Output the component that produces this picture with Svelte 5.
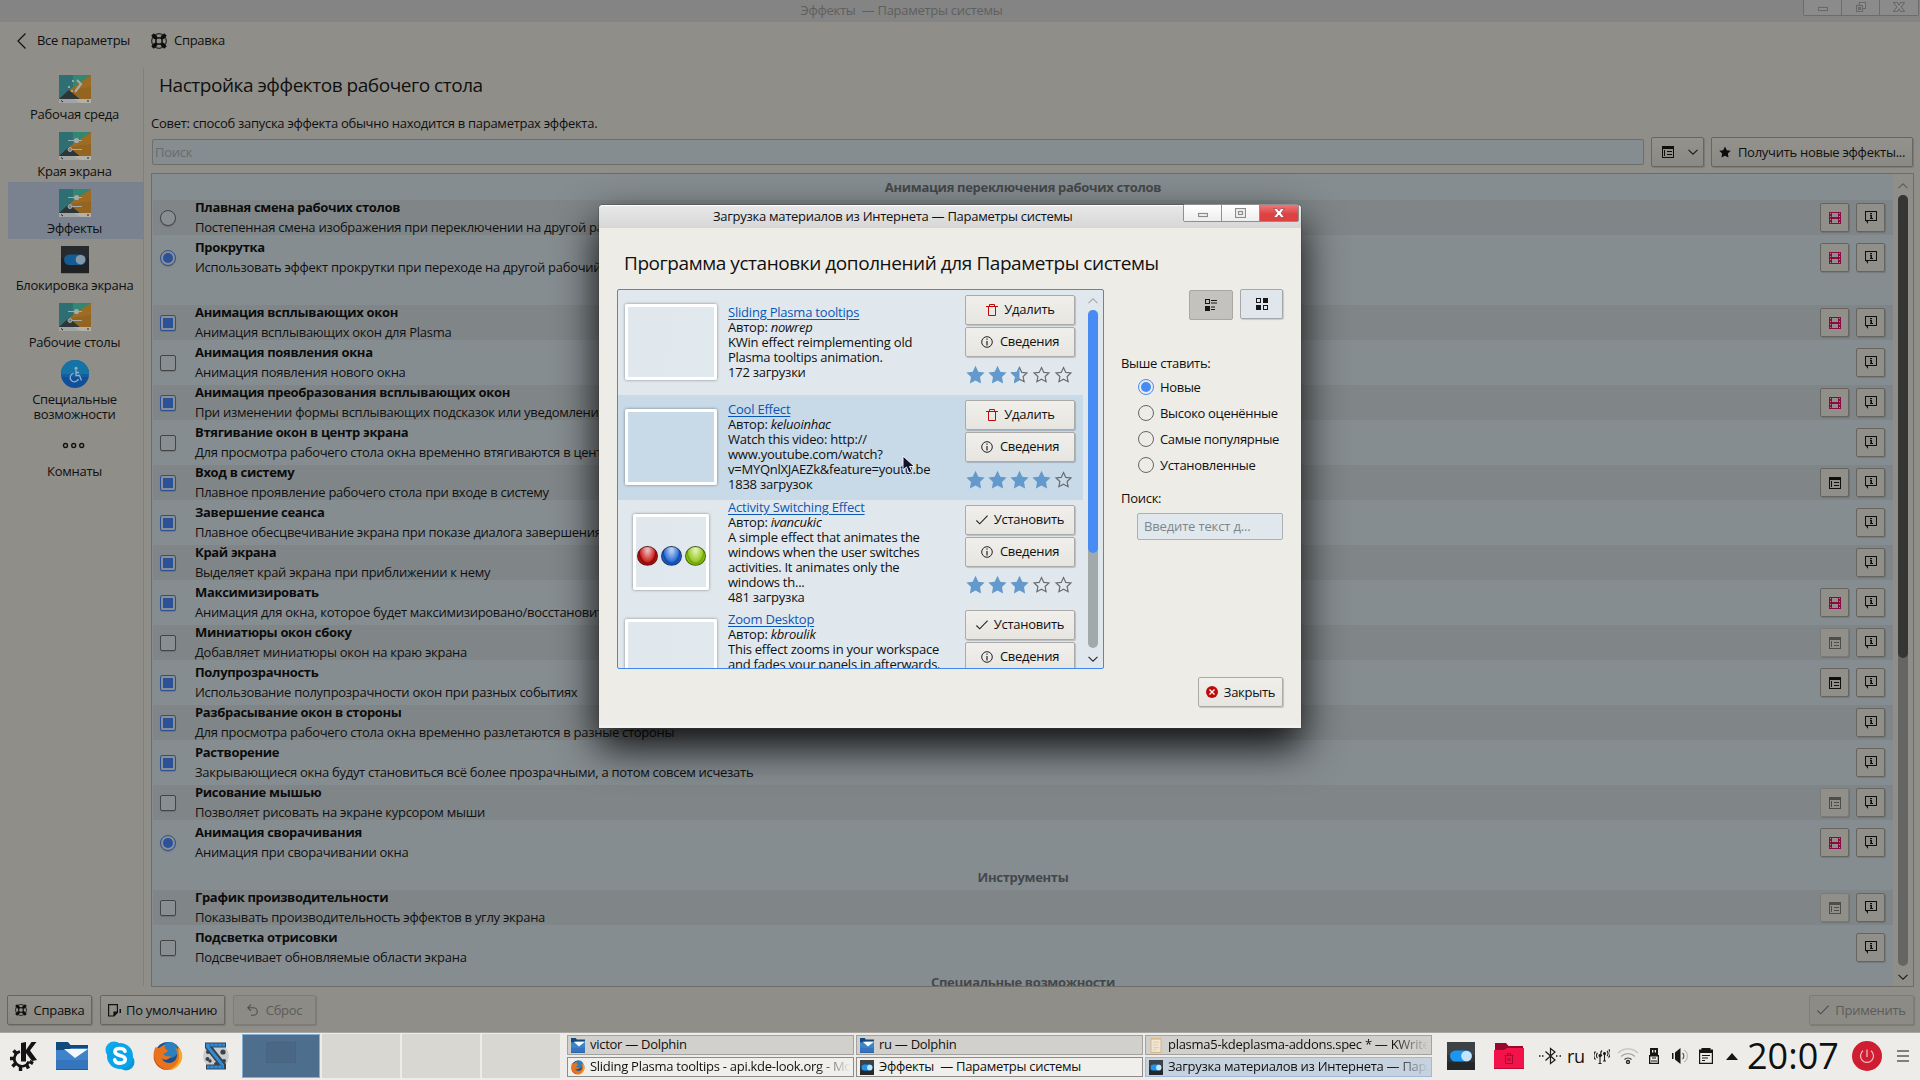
<script>
  const sections = [
    { name: 'Рабочая среда', icon: 'look' },
    { name: 'Края экрана', icon: 'sliders' },
    { name: 'Эффекты', icon: 'sliders', current: true },
    { name: 'Блокировка экрана', icon: 'toggle' },
    { name: 'Рабочие столы', icon: 'sliders' },
    { name: 'Специальные\nвозможности', icon: 'access', tall: true },
    { name: 'Комнаты', icon: 'dots' }
  ];

  // kind: r = radio, c = checkbox; extra: v = video, s = settings, d = settings (disabled)
  const groups = [
    {
      title: 'Анимация переключения рабочих столов',
      rows: [
        { kind: 'r', on: false, t: 'Плавная смена рабочих столов', d: 'Постепенная смена изображения при переключении на другой рабочий стол', extra: 'v' },
        { kind: 'r', on: true, t: 'Прокрутка', d: 'Использовать эффект прокрутки при переходе на другой рабочий стол', extra: 'v' }
      ]
    },
    {
      title: '',
      rows: [
        { kind: 'c', on: true, t: 'Анимация всплывающих окон', d: 'Анимация всплывающих окон для Plasma', extra: 'v' },
        { kind: 'c', on: false, t: 'Анимация появления окна', d: 'Анимация появления нового окна' },
        { kind: 'c', on: true, t: 'Анимация преобразования всплывающих окон', d: 'При изменении формы всплывающих подсказок или уведомлений', extra: 'v' },
        { kind: 'c', on: false, t: 'Втягивание окон в центр экрана', d: 'Для просмотра рабочего стола окна временно втягиваются в центр' },
        { kind: 'c', on: true, t: 'Вход в систему', d: 'Плавное проявление рабочего стола при входе в систему', extra: 's' },
        { kind: 'c', on: true, t: 'Завершение сеанса', d: 'Плавное обесцвечивание экрана при показе диалога завершения' },
        { kind: 'c', on: true, t: 'Край экрана', d: 'Выделяет край экрана при приближении к нему' },
        { kind: 'c', on: true, t: 'Максимизировать', d: 'Анимация для окна, которое будет максимизировано/восстановить', extra: 'v' },
        { kind: 'c', on: false, t: 'Миниатюры окон сбоку', d: 'Добавляет миниатюры окон на краю экрана', extra: 'd' },
        { kind: 'c', on: true, t: 'Полупрозрачность', d: 'Использование полупрозрачности окон при разных событиях', extra: 's' },
        { kind: 'c', on: true, t: 'Разбрасывание окон в стороны', d: 'Для просмотра рабочего стола окна временно разлетаются в разные стороны' },
        { kind: 'c', on: true, t: 'Растворение', d: 'Закрывающиеся окна будут становиться всё более прозрачными, а потом совсем исчезать' },
        { kind: 'c', on: false, t: 'Рисование мышью', d: 'Позволяет рисовать на экране курсором мыши', extra: 'd' },
        { kind: 'r', on: true, t: 'Анимация сворачивания', d: 'Анимация при сворачивании окна', extra: 'v' }
      ]
    },
    {
      title: 'Инструменты',
      rows: [
        { kind: 'c', on: false, t: 'График производительности', d: 'Показывать производительность эффектов в углу экрана', extra: 'd' },
        { kind: 'c', on: false, t: 'Подсветка отрисовки', d: 'Подсвечивает обновляемые области экрана' }
      ]
    },
    { title: 'Специальные возможности', rows: [] }
  ];

  const addons = [
    { name: 'Sliding Plasma tooltips', author: 'nowrep', lines: ['KWin effect reimplementing old', 'Plasma tooltips animation.'], count: '172 загрузки', installed: true, rating: 2.5 },
    { name: 'Cool Effect', author: 'keluoinhac', lines: ['Watch this video: http://', 'www.youtube.com/watch?', 'v=MYQnlXJAEZk&feature=youtu.be'], count: '1838 загрузок', installed: true, rating: 4, hover: true },
    { name: 'Activity Switching Effect', author: 'ivancukic', lines: ['A simple effect that animates the', 'windows when the user switches', 'activities. It animates only the', 'windows th...'], count: '481 загрузка', rating: 3, balls: true },
    { name: 'Zoom Desktop', author: 'kbroulik', lines: ['This effect zooms in your workspace', 'and fades your panels in afterwards.', ''], count: '', rating: 0 }
  ];

  const sorts = ['Новые', 'Высоко оценённые', 'Самые популярные', 'Установленные'];

  const tasks = [
    { icon: 'folder', name: 'victor — Dolphin', min: true },
    { icon: 'folder', name: 'ru — Dolphin', min: true },
    { icon: 'doc', name: 'plasma5-kdeplasma-addons.spec * — KWrite', min: true, fade: true },
    { icon: 'fox', name: 'Sliding Plasma tooltips - api.kde-look.org - Mozilla', fade: true },
    { icon: 'toggle', name: 'Эффекты\u00a0 — Параметры системы' },
    { icon: 'toggle', name: 'Загрузка материалов из Интернета — Параметры', active: true, fade: true }
  ];

  const star = 'M9.5 .8 12.3 6.7 18.6 7.5 14 11.9 15.1 18.4 9.5 15.4 3.9 18.4 5 11.9 .4 7.5 6.7 6.7Z';
  const starOutline = 'M9.5 2.6 11.8 7.4 16.9 8 13.1 11.5 14.1 16.7 9.5 14.2 4.9 16.7 5.9 11.5 2.1 8 7.2 7.4Z';
</script>

{#snippet toggle()}
  <rect width="28" height="28" fill="#2f3336" />
  <path d="M0 0H28V13H0Z" fill="#3c4246" />
  <path d="M0 20H28V28H0Z" fill="#24272a" />
  <rect x="3" y="8.5" width="22" height="11" rx="5.5" fill="#1c96f3" />
  <circle cx="19.5" cy="14" r="5.3" fill="#c3e4fb" />
{/snippet}

{#snippet folder()}
  <path d="M0 0H12L14.500 3H32V14H0Z" fill="#134a7c" />
  <path d="M0 8H12L15 6H32V28H0Z" fill="#3f84ca" />
  <path d="M0 18H32V28H0Z" fill="#3575bd" />
  <path d="M8 7H32L19 16Z" fill="#f6f9fc" />
  <path d="M0 27H32V28H0Z" fill="#27599a" />
{/snippet}

{#snippet fox()}
  <circle cx="15" cy="14.500" r="13.500" fill="#17508f" />
  <circle cx="17" cy="9" r="8" fill="#2c80bd" />
  <path d="M2.500 6C3.500 7 5 6.500 6 7C9 4.500 11 4 12.500 4C11 6 11.500 8 15 9.500C14 12 11 12 10.500 13C11.500 15 15 16 18 15C16.500 19 11 20 9 17C10 22 18 24 22.500 19C25 15.500 24.500 10 22 6.500C27 9 28 12 28.500 15C28.500 22 23 29 15 29C7 29 .5 23 .5 15C.5 11 1.500 8 2.500 6Z" fill="#e8731f" />
  <path d="M25 6C28.500 9 29.500 13 29.200 17C28 24 22 29 15.500 29C21 27 26.500 22 26 15C26 11 25 8 25 6Z" fill="#f7a823" />
  <path d="M1 15C2 23 8 28 15 29C8 29.500 .5 23 1 15Z" fill="#c5391f" />
{/snippet}

{#snippet help(size)}
  <svg class="ico" width={size} height={size} viewBox="0 0 16 16" fill="none" stroke="#0e0e0d">
    <circle cx="8" cy="8" r="7.300" stroke-width="1" />
    <circle cx="8" cy="8" r="3.300" stroke-width="1" />
    <path d="M1.500 1.500 5.500 5.500M14.500 1.500 10.500 5.500M1.500 14.500 5.500 10.500M14.500 14.500 10.500 10.500" stroke-width="3.600" />
    <path d="M5 2V14M11 2V14M2 5H14M2 11H14" stroke-width="1" />
  </svg>
{/snippet}

{#snippet settingsIcon()}
  <svg class="ico" width="12" height="12" viewBox="0 0 12 12" fill="#0e0e0d">
    <path d="M0 0H12V12H0ZM1 3V11H11V3Z" fill-rule="evenodd" />
    <path d="M2 4H3V10H2ZM5 5H10V6H5ZM5 8H10V9H5Z" />
  </svg>
{/snippet}

{#snippet videoIcon()}
  <svg class="ico" width="12" height="12" viewBox="0 0 12 12">
    <path d="M0 0H12V12H0ZM3 1V5H9V1ZM3 7V11H9V7Z" fill="#8a0b42" fill-rule="evenodd" />
    <path d="M1 1H2V2H1ZM1 4H2V5H1ZM1 7H2V8H1ZM1 10H2V11H1ZM10 1H11V2H10ZM10 4H11V5H10ZM10 7H11V8H10ZM10 10H11V11H10Z" fill="#aa8f94" />
  </svg>
{/snippet}

{#snippet infoIcon()}
  <svg class="ico" width="12" height="13" viewBox="0 0 12 13" fill="#0e0e0d">
    <path d="M0 0H12V10H3V13L1 10H0ZM1 1V9H11V1Z" fill-rule="evenodd" />
    <path d="M5 2H7V3.300H5ZM5 4H7V7H8V8H5V7H5.500V5H5Z" />
  </svg>
{/snippet}

{#snippet chevron(dir, color)}
  <svg class="chev" width="10" height="6" viewBox="0 0 10 6" fill="none" stroke={color} stroke-width="1.100">
    <path d={dir === 'up' ? 'M.5 5.200 5 .8 9.500 5.200' : 'M.5 .8 5 5.200 9.500 .8'} />
  </svg>
{/snippet}

{#snippet check(color)}
  <svg class="ico" width="12" height="10" viewBox="0 0 12 10" fill="none" stroke={color} stroke-width="1.100"><path d="M.4 5.500 3.700 8.800 11.600 .7" /></svg>
{/snippet}

<div class="desktop">
  <main class="app">
    <header class="titlebar">
      <span class="title">Эффекты&nbsp; — Параметры системы</span>
      <div class="winbtns dim">
        <i><svg width="10" height="10" viewBox="0 0 10 10"><rect x=".5" y="5.500" width="9" height="3" /></svg></i>
        <i><svg width="10" height="10" viewBox="0 0 10 10"><path d="M3.500 3.500V.5H9.500V6.500H6.500" /><rect x=".5" y="3.500" width="6" height="6" /><rect x="2.500" y="5.500" width="2" height="2" /></svg></i>
        <i><svg width="12" height="10" viewBox="0 0 12 10"><path class="x" d="M.5 .5H4L6 3 8 .5H11.500L8 5 11.500 9.500H8L6 7 4 9.500H.5L4 5Z" /></svg></i>
      </div>
    </header>

    <nav class="toolbar">
      <svg class="back" width="9" height="16" viewBox="0 0 9 16" fill="none" stroke="#111" stroke-width="1.200"><path d="M8.500 .5 1 8 8.500 15.500" /></svg>
      <span class="all">Все параметры</span>
      {@render help(16)}
      <span class="hlp">Справка</span>
    </nav>

    <div class="middle">
      <aside class="sidebar">
        {#each sections as s}
          <div class="section" class:current={s.current} class:tall={s.tall}>
            <svg width="32" height="28" viewBox="0 0 32 28">
              {#if s.icon === 'look' || s.icon === 'sliders'}
                <path d="M0 0H32V24H0Z" fill="#2d6f72" />
                <path d="M14 0H32L14 15Z" fill="#338672" />
                <path d="M0 24 11 14 21 24Z" fill="#2c3637" />
                <path d="M32 0V24H21L10 15Z" fill="#9d6c22" />
                <path d="M32 12V24H21L10 15Z" fill="#946520" />
                <path d="M0 24H32V28H0Z" fill="#a3a4a4" />
                <path d="M14 24H32V28H22Z" fill="#b3b1aa" />
                <path d="M2 25.500 4 27M29 25V27" stroke="#222" stroke-width="1" />
                {#if s.icon === 'sliders'}
                  <path d="M9 8.500H23M9 17.500H23" stroke="#a5aaa8" stroke-width="1.200" />
                  <circle cx="17.500" cy="8.500" r="2.600" fill="#a5aaa8" />
                  <circle cx="11" cy="17.500" r="2" fill="#7a7f7d" stroke="#a5aaa8" />
                {:else}
                  <path d="M18 5 22 9 16 17" stroke="#a5aaa8" stroke-width="2.200" fill="none" />
                  <path d="M13 5h2v2h-2zM9 11h2v2H9zM12 15h2v2h-2z" fill="#9aa6a5" />
                {/if}
              {:else if s.icon === 'toggle'}
                <rect x="2" width="28" height="27" fill="#1e2022" />
                <path d="M2 0H30V12H2Z" fill="#272a2c" />
                <path d="M2 27H30V28H2Z" fill="#77756f" />
                <rect x="5" y="8.500" width="22" height="10.500" rx="5.200" fill="#145c93" />
                <circle cx="21.500" cy="13.700" r="4.800" fill="#8499a8" />
              {:else if s.icon === 'access'}
                <circle cx="16" cy="14" r="14" fill="#115ea1" />
                <path d="M2 14A14 14 0 0 1 30 14Z" fill="#1573a5" />
                <path d="M2.400 17A14 14 0 0 0 29.600 17Z" fill="#124f9a" />
                <circle cx="17" cy="8.300" r="1.500" fill="#95b1c5" />
                <path d="M17 10V15.500H20.500L22.500 20.500M17 12.500H20M14.500 13.300A4.300 4.300 0 1 0 19.500 19" stroke="#95b1c5" stroke-width="1.300" fill="none" />
              {:else}
                <g fill="none" stroke="#111" stroke-width="1.300"><circle cx="6.500" cy="13.500" r="2" /><circle cx="14.700" cy="13.500" r="2" /><circle cx="22.700" cy="13.500" r="2" /></g>
              {/if}
            </svg>
            <span>{s.name}</span>
          </div>
        {/each}
      </aside>

      <section class="content">
        <h1>Настройка эффектов рабочего стола</h1>
        <p class="tip">Совет: способ запуска эффекта обычно находится в параметрах эффекта.</p>
        <div class="filter">
          <div class="search">Поиск</div>
          <div class="btn split">{@render settingsIcon()}{@render chevron('down', '#1c1c1b')}</div>
          <div class="btn getnew">
            <svg class="ico" width="12" height="12" viewBox="0 0 19 19"><path d={star} fill="#0c0c0c" /></svg>
            <span>Получить новые эффекты...</span>
          </div>
        </div>

        <div class="effects">
          <div class="rows">
            {#each groups as g}
              <h2>{g.title}</h2>
              {#each g.rows as r, i}
                <div class="row" class:odd={i % 2 === 0}>
                  <span class="mark" class:radio={r.kind === 'r'} class:on={r.on}></span>
                  <div class="txt"><b>{r.t}</b><span>{r.d}</span></div>
                  {#if r.extra === 'v'}<span class="tool">{@render videoIcon()}</span>{/if}
                  {#if r.extra === 's' || r.extra === 'd'}<span class="tool" class:off={r.extra === 'd'}>{@render settingsIcon()}</span>{/if}
                  <span class="tool">{@render infoIcon()}</span>
                </div>
              {/each}
            {/each}
          </div>
          <div class="scroll">
            {@render chevron('up', '#5f5e5a')}
            <div class="groove"><div class="thumb"></div></div>
            {@render chevron('down', '#1d1d1c')}
          </div>
        </div>
      </section>
    </div>

    <footer class="actions">
      <div class="btn a1">{@render help(12)}<span>Справка</span></div>
      <div class="btn a2">
        <svg class="ico" width="13" height="13" viewBox="0 0 13 13" fill="none" stroke="#111" stroke-width="1.200"><path d="M.6 .6H9.400V8.500L6 12H.6Z" /><path d="M9.500 8H6V12" fill="#111" /><path d="M12.300 5V9" stroke-width="1.600" /></svg>
        <span>По умолчанию</span>
      </div>
      <div class="btn a3 disabled">
        <svg class="ico" width="11" height="12" viewBox="0 0 11 12" fill="none" stroke="#4f4e4b" stroke-width="1.100"><path d="M4 .6 .8 3.700 4 6.800M1 3.700H6.500A3.700 3.700 0 0 1 6.500 11.300H4" /></svg>
        <span>Сброс</span>
      </div>
      <div class="btn a4 disabled">{@render check('#4f4e4b')}<span>Применить</span></div>
    </footer>
  </main>

  <footer class="panel">
    <div class="launch">
      <svg width="28" height="30" viewBox="0 0 28 30">
        <path d="M10 10.500A7.500 7.500 0 1 0 18.800 20.500" fill="none" stroke="#141414" stroke-width="2.600" />
        <path d="M3.500 9.500 6 12M0 17.500H4M2.500 25.500 5.500 22.500M10.500 25V30M16.500 23.500 18.500 27.500M19.500 20.500 23 22.500" stroke="#141414" stroke-width="3.400" />
        <path d="M11 2 16 1V9L21.500 1H26.500L20 9.500 27 19 22 20 16 12V20.500L11 20.500Z" fill="#141414" />
      </svg>
      <svg width="32" height="28" viewBox="0 0 32 28">{@render folder()}</svg>
      <svg width="30" height="30" viewBox="0 0 30 30">
        <circle cx="9" cy="9" r="8.500" fill="#0fa8ea" /><circle cx="21" cy="21" r="8.500" fill="#0b96d8" /><circle cx="15" cy="15" r="13" fill="#0aa5e9" />
        <path d="M20 10.200C19 6.800 10 6.300 10 10.800C10 15.500 20.300 13.300 20.300 18.500C20.300 23.300 10.300 23.200 9.700 18.700" fill="none" stroke="#fff" stroke-width="3.600" stroke-linecap="round" />
      </svg>
      <svg width="30" height="30" viewBox="0 0 30 30">{@render fox()}</svg>
      <svg width="26" height="28" viewBox="0 0 26 28">
        <circle cx="13" cy="14" r="12.800" fill="#c9cdd0" />
        <g fill="#3c4246"><circle cx="5" cy="10" r="2" /><circle cx="4.500" cy="17" r="2" /><circle cx="20" cy="10" r="2.600" /><circle cx="13" cy="22" r="2" /><circle cx="7" cy="19" r="1.700" /><circle cx="21" cy="19" r="2" /></g>
        <path d="M2 .5H23V5.500H10L23 22V27.500H3V22.500H15L2 6Z" fill="#3a4248" />
        <path d="M3 1.500H22V4.500H6.500L21 22.500V26.500H4V23.500H18L3 5Z" fill="#2f8ddc" />
        <path d="M7 1V5M11 1V5M15 1V5M19 1V5M7 23V27M11 23V27M15 23V27M19 23V27" stroke="#1f5f9c" stroke-width=".8" />
      </svg>
    </div>

    <div class="pager"><i class="here"><b></b></i><i></i><i></i><i></i></div>

    <div class="tasks">
      {#each tasks as t}
        <div class="task" class:min={t.min} class:active={t.active}>
          <svg width="14" height="15" viewBox={t.icon === 'folder' ? '2 0 30 28' : t.icon === 'fox' ? '0 0 30 30' : '0 0 28 28'} preserveAspectRatio="none">
            {#if t.icon === 'folder'}{@render folder()}
            {:else if t.icon === 'fox'}{@render fox()}
            {:else if t.icon === 'toggle'}{@render toggle()}
            {:else}
              <path d="M3 0H25V28H3Z" fill="#d8b887" /><path d="M5 3H23V26H5Z" fill="#f1e6d3" />
              <path d="M8 8H20M8 13H18M8 18H20M8 22H15" stroke="#dac6a2" stroke-width="1.500" />
            {/if}
          </svg>
          <span class:fade={t.fade}>{t.name}</span>
        </div>
      {/each}
    </div>

    <div class="tray">
      <svg class="t-toggle" width="28" height="28" viewBox="0 0 28 28">{@render toggle()}</svg>
      <svg class="t-trash" width="30" height="27" viewBox="0 0 30 27">
        <path d="M1 0H12L14.500 3H29V12H1Z" fill="#96082c" />
        <path d="M0 7H10L13 5H30V26H0Z" fill="#f3124a" /><path d="M0 25H30V26H0Z" fill="#b90d38" />
        <path d="M10.500 12.500H19.500M13.500 12V10.500H16.500V12M11.500 13V20.500H18.500V13M14 15V18M16 15V18" fill="none" stroke="#9c0c31" />
      </svg>
      <svg class="t-bt" width="22" height="18" viewBox="0 0 22 18" fill="none" stroke="#1b1b1b" stroke-width="1.200">
        <path d="M6.500 4.500 16 13 11.500 16.500V1.500L16 5 6.500 13.500" /><path d="M0 9H1.500M3 9H4.500M17 9H18.500M20.500 9H22" stroke-width="1.600" />
      </svg>
      <span class="lang">ru</span>
      <svg class="t-ant" width="16" height="16" viewBox="0 0 16 16" fill="none" stroke="#1b1b1b" stroke-width="1.100">
        <path d="M6 8V15.500M4.500 15.500H7.500M10.500 6V12.500M9 13H12" /><circle cx="6" cy="7.500" r="1" fill="#1b1b1b" /><circle cx="10.500" cy="5.500" r="1" fill="#1b1b1b" />
        <path d="M3.500 5A3.500 3.500 0 0 0 3.500 10M1.500 3.500A5.500 5.500 0 0 0 1.500 11.500M13 3A3.500 3.500 0 0 1 13 8M14.800 1.500A5.500 5.500 0 0 1 14.500 9.500M8 2.500A4 4 0 0 0 8 8" />
      </svg>
      <svg class="t-wifi" width="22" height="16" viewBox="0 0 22 16" fill="none" stroke-width="1.300">
        <path d="M1 5A14 14 0 0 1 21 5" stroke="#c2c1be" /><path d="M4 8.500A10 10 0 0 1 18 8.500" stroke="#a9a8a5" /><path d="M7.500 11.500A5 5 0 0 1 14.500 11.500" stroke="#3a3a3a" /><circle cx="11" cy="14" r="1.500" stroke="#222" />
      </svg>
      <svg class="t-usb" width="10" height="16" viewBox="0 0 10 16"><path d="M1 0H9V7H10V16H0V7H1Z" fill="#161616" /><path d="M3 2H4.300V4.500H3ZM5.700 2H7V4.500H5.700ZM1.300 8.500H8.700V14.700H1.300Z" fill="#edece8" /><path d="M3 10H7M2 13H8" stroke="#161616" /></svg>
      <svg class="t-vol" width="16" height="16" viewBox="0 0 16 16"><path d="M0 5H1.500V11H0ZM3 4.500 8.500 0V16L3 11.500Z" fill="#161616" /><path d="M10.500 5A4 4 0 0 1 10.500 11" fill="none" stroke="#555" stroke-width="1.200" /><path d="M12 2A7 7 0 0 1 12 14" fill="none" stroke="#bbb" stroke-width="1.200" /></svg>
      <svg class="t-clip" width="14" height="16" viewBox="0 0 14 16"><path d="M0 1.500H2.500V0H11.500V1.500H14V16H0ZM1.200 5V14.800H12.800V5Z" fill="#161616" fill-rule="evenodd" /><path d="M3 7.500H11M3 10H9M3 12.500H6" stroke="#161616" stroke-width="1.100" /></svg>
      <svg class="t-up" width="12" height="7" viewBox="0 0 12 7"><path d="M0 7 6 0 12 7Z" fill="#161616" /></svg>
      <span class="clock">20:07</span>
      <svg class="t-power" width="30" height="30" viewBox="0 0 30 30"><circle cx="15" cy="15" r="15" fill="#cf1d31" /><path d="M15 8.500V16M11 9.800A6.500 6.500 0 1 0 19 9.800" fill="none" stroke="#f3c4ca" stroke-width="1.200" /></svg>
      <svg class="t-menu" width="12" height="12" viewBox="0 0 12 12"><path d="M0 1H12M0 6H12M0 11H12" stroke="#807f7c" stroke-width="1.800" /></svg>
    </div>
  </footer>

  <div class="dialog">
    <header class="dtitle">
      <span>Загрузка материалов из Интернета — Параметры системы</span>
      <div class="winbtns">
        <i><svg width="10" height="10" viewBox="0 0 10 10"><rect x=".5" y="5.500" width="9" height="3" /></svg></i>
        <i><svg width="11" height="10" viewBox="0 0 11 10"><rect x=".5" y=".5" width="10" height="9" /><rect x="3.500" y="3.500" width="4" height="3" /></svg></i>
        <i class="red"><svg width="12" height="10" viewBox="0 0 12 10"><path class="x" d="M.5 .5H4L6 3 8 .5H11.500L8 5 11.500 9.500H8L6 7 4 9.500H.5L4 5Z" /></svg></i>
      </div>
    </header>
    <h1>Программа установки дополнений для Параметры системы</h1>

    <div class="dbody">
      <div class="addons">
        <div class="items">
          {#each addons as a}
            <article class:hover={a.hover}>
              <div class="shot" class:small={a.balls}>
                {#if a.balls}
                  {#each ['red', 'blue', 'green'] as c}<i class={c}></i>{/each}
                {/if}
              </div>
              <div class="about" class:even={a.lines.length === 3}>
                <a href="#{a.author}">{a.name}</a>
                <span>Автор: <em>{a.author}</em></span>
                {#each a.lines as l}<span>{l}</span>{/each}
                <span>{a.count}</span>
              </div>
              <div class="ctl">
                <div class="btn" class:remove={a.installed}>
                  {#if a.installed}
                    <svg class="ico" width="12" height="12" viewBox="0 0 12 12" fill="none" stroke="#bf0909"><path d="M0 2.500H12M3.500 2.500V.5H8.500V2.500M2.500 2.500V11.500H9.500V2.500" /></svg>
                    <span>Удалить</span>
                  {:else}
                    {@render check('#222')}<span>Установить</span>
                  {/if}
                </div>
                <div class="btn">
                  <svg class="ico" width="12" height="12" viewBox="0 0 12 12" fill="none" stroke="#222"><circle cx="6" cy="6" r="5.300" /><path d="M6 2.500V3.800M6 5V9.500" stroke-width="1.200" /></svg>
                  <span>Сведения</span>
                </div>
                <div class="stars">
                  {#each [1, 2, 3, 4, 5] as n}
                    <svg width="19" height="19" viewBox="0 0 19 19">
                      {#if a.rating >= n}
                        <path d={star} fill="#639acb" />
                      {:else}
                        <path d={starOutline} fill="none" stroke="#666b70" stroke-width="1.200" />
                        {#if a.rating > n - 1}<path d="M9.500 .8V15.400L3.900 18.400 5 11.900 .4 7.500 6.700 6.700Z" fill="#639acb" />{/if}
                      {/if}
                    </svg>
                  {/each}
                </div>
              </div>
            </article>
          {/each}
        </div>
        <div class="dscroll">
          {@render chevron('up', '#a9a9a6')}
          <div class="groove"><div class="thumb"></div></div>
          {@render chevron('down', '#2a2a2a')}
        </div>
      </div>

      <div class="side">
        <div class="views">
          <i class="pressed"><svg width="12" height="12" viewBox="0 0 12 12" fill="#161616"><path d="M0 0H5V5H0ZM1 1V4H4V1Z" fill-rule="evenodd" /><path d="M0 7H5V12H0ZM6 1H12V2H6ZM6 3.500H12V4.500H6ZM6 7.500H10V8.500H6ZM6 10H10V11H6Z" /></svg></i>
          <i><svg width="12" height="12" viewBox="0 0 12 12" fill="#161616"><path d="M0 0H5V5H0ZM1 1V4H4V1ZM7 7H12V12H7ZM8 8V11H11V8Z" fill-rule="evenodd" /><path d="M7 0H12V5H7ZM0 7H5V12H0Z" /></svg></i>
        </div>
        <span class="lab">Выше ставить:</span>
        {#each sorts as s, i}
          <div class="opt"><i class="rad" class:on={i === 0}></i>{s}</div>
        {/each}
        <span class="lab find">Поиск:</span>
        <div class="input">Введите текст д...</div>
      </div>
    </div>

    <div class="dfoot">
      <div class="btn close">
        <svg class="ico" width="12" height="12" viewBox="0 0 12 12"><circle cx="6" cy="6" r="6" fill="#bf0a0a" /><path d="M3.500 3.500 8.500 8.500M8.500 3.500 3.500 8.500" stroke="#fff" stroke-width="1.300" /></svg>
        <span>Закрыть</span>
      </div>
    </div>
  </div>

  <svg class="cursor" width="14" height="20" viewBox="0 0 14 20"><path d="M1 1V15L4.500 12 7 18 10 16.500 7.500 11.500H12.500Z" fill="#11132b" stroke="#f4f4f8" stroke-width="1" /></svg>
</div>

<style>
  :global(body) { margin: 0; overflow: hidden; }
  .desktop {
    position: relative; width: 1920px; height: 1080px; overflow: hidden;
    display: flex; flex-direction: column; box-sizing: border-box;
    font: 13px/15px 'Open Sans', 'Noto Sans', sans-serif; letter-spacing: -0.28px; color: #101010; white-space: nowrap;
  }
  .desktop :global(*) { box-sizing: border-box; }
  svg { display: block; flex: none; }
  i { font-style: normal; }
  h1 { margin: 0; font-size: 19px; line-height: 26px; font-weight: 400; letter-spacing: -0.46px; }

  .app { height: 1032px; background: #8f8e89; display: flex; flex-direction: column; }
  .titlebar { height: 22px; background: #848484; display: flex; justify-content: flex-end; align-items: flex-start; }
  .titlebar .title { flex: 1; padding: 3px 0 0 0; text-align: center; color: #5f5f5f; }
  .winbtns { display: flex; height: 18px; margin-right: 2px; border: 1px solid #8f8f8f; border-radius: 2px; }
  .winbtns i { width: 38px; display: flex; align-items: center; justify-content: center; background: linear-gradient(#fff, #ededed); border-right: 1px solid #8f8f8f; }
  .winbtns i:last-child { border: 0; }
  .winbtns svg { fill: #f4f4f4; stroke: #8b8b8b; stroke-width: 1.200; }
  .winbtns .red { background: linear-gradient(#ee7777, #dd4141 60%); }
  .winbtns .red svg { fill: #fff; stroke: #a04848; stroke-width: .8; }
  .winbtns.dim { margin: -2px 1px 0 0; border-color: #6c6c6c; }
  .winbtns.dim i { background: #8b8b8b; border-color: #6c6c6c; }
  .winbtns.dim svg { fill: #929292; stroke: #696969; }

  .toolbar { height: 46px; display: flex; align-items: center; padding: 0 0 9px 17px; }
  .all { width: 114px; margin-left: 11px; }
  .hlp { margin-left: 7px; }

  .middle { height: 918px; display: flex; }
  .sidebar { width: 144px; padding-left: 8px; border-right: 1px solid #76818b; }
  .section { height: 57px; padding: 7px 2px 0 0; display: flex; flex-direction: column; align-items: center; text-align: center; }
  .section span { margin-top: 4px; white-space: pre; }
  .section.tall { height: 72px; }
  .section.current { background: #7a828f; }

  .content { flex: 1; padding: 4px 6px 0 7px; display: flex; flex-direction: column; }
  .content h1 { padding-left: 8px; }
  .tip { margin: 18px 0 0; }
  .filter { display: flex; margin-top: 6px; padding-left: 1px; align-items: center; height: 30px; }
  .search { width: 1492px; height: 26px; border: 1px solid #6d6f6d; border-radius: 2px; background: #868d91; color: #686b6c; padding: 5px 2px; }
  .btn {
    display: flex; align-items: center; justify-content: center; height: 30px;
    border: 1px solid #676662; border-radius: 2px; background: linear-gradient(#93928d, #8a8984); box-shadow: 1px 1px 1px rgba(0, 0, 0, .15);
  }
  .ctl .btn span { padding-bottom: 1px; }
  .split { width: 53px; margin-left: 7px; gap: 14px; padding-left: 4px; }
  .getnew { width: 202px; margin-left: 7px; gap: 7px; }

  .effects { margin-top: 6px; width: 1763px; height: 814px; border: 1px solid #6e6c66; display: flex; }
  .rows { width: 1741px; height: 812px; background: #868d91; overflow: hidden; padding: 1px 0 0 1px; }
  h2 { margin: 0; height: 25px; padding-top: 5px; text-align: center; font-size: 13px; line-height: 15px; font-weight: 700; color: #44484a; letter-spacing: -0.32px; }
  .row { height: 35px; margin-bottom: 5px; display: flex; padding-right: 8px; align-items: flex-start; }
  .row.odd { background: #808688; }
  .txt { flex: 1; margin-left: 19px; display: flex; flex-direction: column; gap: 5px; }
  .txt b { font-weight: 700; color: #0c0c0c; letter-spacing: -0.33px; }
  .mark { width: 16px; height: 16px; margin: 10px 0 0 7px; border: 1px solid #444; border-radius: 2px; background: #888e91; box-shadow: 0 1px 1px rgba(0, 0, 0, .15); padding: 2px; }
  .mark.on { border-color: #2b5095; }
  .mark.on::before { content: ''; display: block; height: 100%; background: #2b5299; }
  .mark.radio, .mark.radio.on::before { border-radius: 50%; }
  .tool { width: 29px; height: 29px; margin: 3px 0 0 7px; display: flex; align-items: center; justify-content: center; border: 1px solid #65645f; border-radius: 2px; background: #918f8a; box-shadow: 1px 1px 1px rgba(0, 0, 0, .15); }
  .tool.off { border-color: #7b7a76; }
  .tool.off :global(svg) { opacity: .5; }
  .scroll, .dscroll { display: flex; flex-direction: column; align-items: center; }
  .scroll { flex: 1; padding-top: 9px; }
  .scroll .groove { width: 10px; height: 771px; margin: 6px 0 8px; border-radius: 5px; background: #656563; }
  .scroll .thumb { height: 463px; border-radius: 5px; background: #353533; }

  .actions { display: flex; padding: 9px 6px 0 7px; }
  .a1 { width: 85px; gap: 7px; }
  .a2 { width: 125px; gap: 5px; margin-left: 8px; }
  .a3 { width: 83px; gap: 8px; margin-left: 8px; }
  .a4 { width: 105px; gap: 6px; margin-left: auto; }
  .disabled { color: #5d5c59; border-color: #7d7c77; background: #8c8b86; }

  .panel { height: 48px; border-top: 1px solid #a7a6a2; background: #edece8; display: flex; }
  .launch { display: flex; width: 242px; padding: 8px 0 0 10px; }
  .launch svg:nth-child(2) { margin: 1px 0 0 18px; }
  .launch svg:nth-child(3) { margin: 0 0 0 17px; }
  .launch svg:nth-child(4) { margin: 0 0 0 18px; }
  .launch svg:nth-child(5) { margin: 1px 0 0 20px; }
  .pager { display: flex; gap: 2px; padding-top: 1px; }
  .pager i { width: 78px; height: 44px; background: #d8d7d2; }
  .pager .here { background: #4e6e8e; border: 1px solid #86aed2; padding: 7px 23px; }
  .here b { display: block; width: 30px; height: 21px; background: #4a6886; border: 1px solid #466482; }
  .tasks { display: grid; grid-template-columns: repeat(3, 287px); grid-template-rows: 20px 20px; gap: 2px; margin: 2px 0 0 7px; }
  .task { border: 1px solid #8d8c89; display: flex; align-items: center; padding-left: 3px; gap: 5px; overflow: hidden; background: #f0efeb; }
  .task.min { background: #d1d0cc; border-color: #a3a29e; }
  .task.active { background: #c6d3df; border-color: #9dbbd8; }
  .task span { flex: 1; overflow: hidden; padding-bottom: 2px; line-height: 16px; }
  .fade { -webkit-mask-image: linear-gradient(90deg, #000 86%, transparent 99%); mask-image: linear-gradient(90deg, #000 86%, transparent 99%); }
  .tray { display: flex; align-items: center; margin-left: 15px; height: 46px; }
  .t-trash { margin-left: 19px; }
  .t-bt { margin-left: 15px; }
  .lang { font-size: 18px; line-height: 24px; margin-left: 6px; width: 17px; letter-spacing: -.3px; }
  .t-ant { margin-left: 10px; }
  .t-wifi { margin-left: 7px; }
  .t-usb { margin-left: 10px; }
  .t-vol { margin-left: 13px; }
  .t-clip { margin-left: 11px; }
  .t-up { margin-left: 13px; }
  .clock { font-size: 36px; line-height: 46px; width: 92px; margin-left: 9px; letter-spacing: 0; }
  .t-power { margin-left: 13px; }
  .t-menu { margin-left: 15px; }

  /* The add-on window floats over the settings window. */
  .dialog {
    position: absolute; left: 599px; top: 205px; width: 702px; height: 523px;
    border-radius: 4px 4px 0 0; background: #edece7; box-shadow: 0 0 0 1px rgba(60, 60, 60, .35), 0 18px 42px 2px rgba(0, 0, 0, .88);
    display: flex; flex-direction: column; border-bottom: 3px solid #f1f1f1;
  }
  .dtitle { height: 23px; border-radius: 4px 4px 0 0; border-top: 1px solid #fff; background: linear-gradient(#e8e8e8, #d6d6d6); display: flex; }
  .dtitle span { flex: 1; padding: 3px 0 0 114px; }
  .dtitle .winbtns { margin: -2px 2px 0 0; }
  .dialog h1 { padding: 22px 0 0 25px; letter-spacing: -0.43px; }
  .dbody { display: flex; padding: 13px 0 0 18px; }
  .addons { width: 487px; height: 380px; border: 1px solid #4189f0; border-radius: 2px; background: #e0e8ee; display: flex; }
  .items { width: 465px; height: 378px; overflow: hidden; }
  article { height: 105px; display: flex; padding-left: 7px; }
  article.hover { background: #c8d9e7; }
  .shot { width: 92px; height: 76px; margin-top: 14px; border: 3px solid #fff; border-radius: 2px; box-shadow: 0 0 3px rgba(0, 0, 0, .45); background: linear-gradient(100deg, transparent 30%, rgba(224, 234, 236, .6)); display: flex; align-items: center; gap: 3px; padding: 8px 0 0 1px; }
  .hover .shot { background: none; }
  .shot.small { width: 76px; margin-left: 8px; margin-right: 8px; }
  .shot i { width: 21px; height: 20px; border-radius: 50%; border: 1px solid rgba(30, 30, 30, .6); }
  .shot .red { background: radial-gradient(ellipse at 50% 15%, #e8b0b0 10%, #cf2525 55%, #8a0b0b 62%, #f01818 95%); }
  .shot .blue { background: radial-gradient(ellipse at 50% 15%, #b2c8ee 10%, #2d6fd6 55%, #1049ae 62%, #2f80ee 95%); }
  .shot .green { background: radial-gradient(ellipse at 50% 15%, #dcefa8 10%, #98c924 55%, #6ea50a 62%, #aef01a 95%); }
  .about { width: 237px; margin-left: 11px; display: flex; flex-direction: column; justify-content: center; letter-spacing: -0.24px; }
  .about.even { padding-bottom: 1px; }
  .about a { color: #0b57b4; text-decoration: underline; text-underline-offset: 2px; align-self: flex-start; letter-spacing: -0.21px; }
  .about span { height: 15px; }
  .ctl { width: 110px; padding-top: 5px; display: flex; flex-direction: column; gap: 2px; }
  .dialog .btn { border-color: #abaaa6; background: linear-gradient(#f0efeb, #e6e5e0); box-shadow: 1px 1px 1px rgba(0, 0, 0, .18); gap: 6px; }
  .ctl .btn:nth-child(2) { gap: 7px; }
  .ctl .btn.remove { padding-left: 1px; }
  .stars { display: flex; gap: 3px; padding: 5.500px 0 0 1.300px; }
  .dscroll { width: 20px; padding: 8px 1px 0 0; }
  .dscroll .groove { width: 10px; height: 338px; margin: 6px 0 8px; border-radius: 5px; background: #a2a9ab; }
  .dscroll .thumb { height: 243px; border-radius: 5px; background: #478bf5; }

  .side { width: 163px; margin-left: 17px; display: flex; flex-direction: column; }
  .views { display: flex; gap: 7px; justify-content: flex-end; margin-right: 1px; }
  .views i { width: 43px; height: 30px; display: flex; align-items: center; justify-content: center; border: 1px solid #a5a8ab; border-radius: 2px; background: #e0e7ec; box-shadow: 1px 1px 1px rgba(0, 0, 0, .15); }
  .views .pressed { width: 44px; margin-top: 1px; background: #c3c2be; border-color: #a8a7a3; box-shadow: none; }
  .lab { margin-top: 36px; }
  .opt { height: 26px; display: flex; align-items: center; gap: 6px; padding-left: 17px; letter-spacing: -.32px; }
  .lab + .opt { margin-top: 3px; }
  .rad { width: 16px; height: 16px; border: 1px solid #666; border-radius: 50%; padding: 2px; }
  .rad.on { border-color: #4a8af4; }
  .rad.on::before { content: ''; display: block; height: 100%; border-radius: 50%; background: #478bf5; }
  .lab.find { margin-top: 13px; }
  .input { margin: 7px 0 0 16px; width: 146px; height: 27px; border: 1px solid #adb1b4; border-radius: 2px; background: #e0e8ee; color: #7e868b; padding: 5px 6px; letter-spacing: -.15px; }
  .dfoot { display: flex; justify-content: flex-end; padding: 8px 18px 0 0; }
  .close { width: 85px; }

  .cursor { position: absolute; left: 902px; top: 455px; }
</style>
